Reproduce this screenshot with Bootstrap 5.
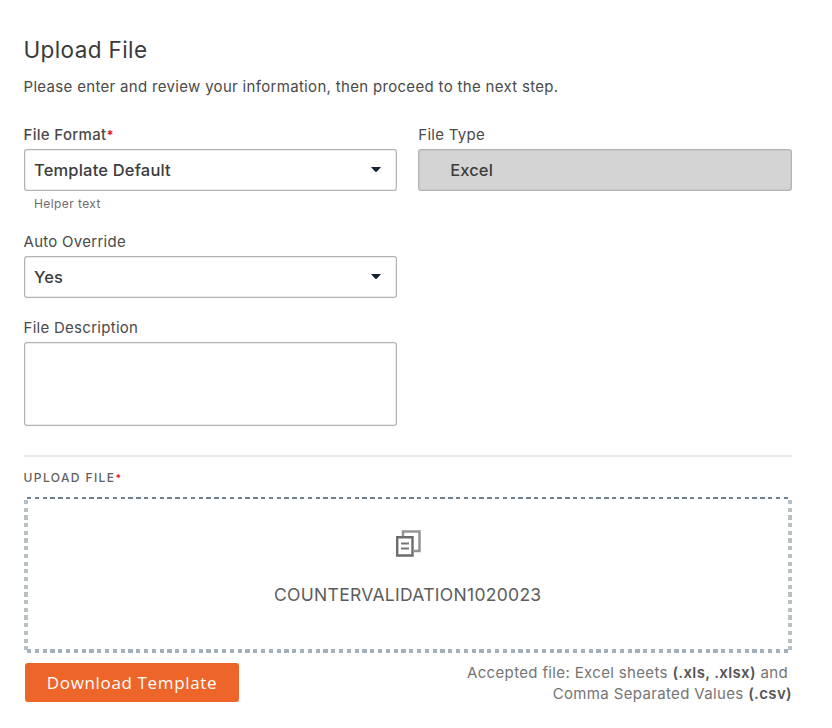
<!DOCTYPE html>
<html lang="en">
<head>
<meta charset="utf-8">
<meta name="viewport" content="width=device-width, initial-scale=1">
<title>Upload File</title>
<link href="https://cdn.jsdelivr.net/npm/bootstrap@5.3.0/dist/css/bootstrap.min.css" rel="stylesheet">
<style>
body{font-family:Inter,"Liberation Sans",sans-serif;color:#4a4a4a;background:#fff}
.upload-page{width:832px;height:728px;padding:35px 40px 0 23.5px}
.page-title{font-size:22.5px;line-height:30px;letter-spacing:.38px;color:#3a3a3a;font-weight:400}
.intro{font-size:15px;line-height:20px;letter-spacing:.32px;margin-top:12px}
.fields{--bs-gutter-x:21px;margin-top:28px}
.fields-next{margin-top:20px}
.form-label{display:block;font-size:15px;line-height:20px;letter-spacing:.28px;margin-bottom:4px}
.form-label.strong-label{font-weight:500;letter-spacing:.32px}
.description-label{margin-top:20px}
.req{color:#e02020;font-weight:700;font-size:.85em;line-height:0;letter-spacing:0}
.field-box{height:42px;border:1.5px solid #b3b3b3;border-width:2px 1px;outline:1px solid #ececec;outline-offset:-2px;border-radius:3px;font-size:16.5px;font-weight:500;line-height:24px;letter-spacing:.18px;color:#3c3c3c;padding:0 15px 0 9.5px;background:#fff}
.field-locked{background:#d4d4d4;padding-left:31px;border-color:#b3b3b3;outline-color:#c9c9c9;letter-spacing:.1px}
.helper{font-size:12px;line-height:16px;letter-spacing:.42px;padding-left:10.5px;margin-top:5px;color:#6c6c6c}
textarea.field-box{height:84px;resize:none}
.rule{height:2px;background:#e9e9e9;margin-top:29px}
.section-label{font-size:12px;line-height:16px;letter-spacing:1.4px;margin-top:13px;font-weight:500;color:#606060}
.drop-area{height:156px;margin-top:11px;
background:
repeating-linear-gradient(90deg,#6f8090 0 4.4px,transparent 4.4px 7.8px) 3px 0/calc(100% - 6px) 2px no-repeat,
repeating-linear-gradient(90deg,#a5b0b9 0 4.2px,transparent 4.2px 7.8px) 3px 100%/calc(100% - 6px) 4px no-repeat,
repeating-linear-gradient(180deg,#b7c0c7 0 4.2px,transparent 4.2px 7.7px) 0 3px/4px calc(100% - 6px) no-repeat,
repeating-linear-gradient(180deg,#b7c0c7 0 4.2px,transparent 4.2px 7.7px) 100% 3px/4px calc(100% - 6px) no-repeat}
.drop-area svg{margin-top:32px}
.file-name{font-size:17.5px;line-height:24px;letter-spacing:.3px;margin-top:26px;color:#5c5c5c}
.btn-template{--bs-btn-color:#fff;--bs-btn-bg:#ee6529;--bs-btn-hover-bg:#d9581f;--bs-btn-hover-color:#fff;width:214px;height:39px;margin:10px 0 0 1.5px;padding:0;border:0;border-radius:3px;font-family:"Open Sans",sans-serif;font-size:17px;letter-spacing:.65px}
.accepted{font-size:15px;line-height:21px;letter-spacing:.35px;margin-top:9px;color:#747474}
.accepted b{font-weight:600;color:#555}
</style>
<script src="https://cdn.jsdelivr.net/npm/bootstrap@5.3.0/dist/js/bootstrap.bundle.min.js"></script>
</head>
<body>
<main class="upload-page overflow-hidden">
<h1 class="page-title mb-0">Upload File</h1>
<p class="intro mb-0">Please enter and review your information, then proceed to the next step.</p>
<div class="row fields">
  <div class="col-6">
    <span class="form-label strong-label">File Format<span class="req">*</span></span>
    <div class="field-box d-flex align-items-center justify-content-between" role="combobox" tabindex="0"><span>Template Default</span><svg width="10" height="6" viewBox="0 0 10 6"><path d="M0 0h10L6 4.6q-1 .9-2 0z" fill="#172033"/></svg></div>
    <div class="helper">Helper text</div>
  </div>
  <div class="col-6">
    <span class="form-label">File Type</span>
    <div class="field-box field-locked d-flex align-items-center"><span>Excel</span></div>
  </div>
</div>
<div class="row fields fields-next">
  <div class="col-6">
    <span class="form-label">Auto Override</span>
    <div class="field-box d-flex align-items-center justify-content-between" role="combobox" tabindex="0"><span>Yes</span><svg width="10" height="6" viewBox="0 0 10 6"><path d="M0 0h10L6 4.6q-1 .9-2 0z" fill="#172033"/></svg></div>
    <label class="form-label description-label" for="description">File Description</label>
    <textarea id="description" class="field-box d-block w-100"></textarea>
  </div>
</div>
<div class="rule"></div>
<div class="section-label">UPLOAD FILE<span class="req">*</span></div>
<div class="drop-area d-flex flex-column align-items-center">
  <svg width="26" height="28" viewBox="0 0 26 28" fill="none"><path d="M8 7V2.5H24.5V22H19" stroke="#949494" stroke-width="2.5"/><path d="M2.2 8.2H17.5V26.5H2.2z" fill="#fff" stroke="#6c6c6c" stroke-width="2.4"/><path d="M6 14.5h8M6 19.5h8" stroke="#777" stroke-width="2"/></svg>
  <div class="file-name">COUNTERVALIDATION1020023</div>
</div>
<div class="d-flex justify-content-between align-items-start">
  <button type="button" class="btn btn-template">Download Template</button>
  <div class="accepted text-end"><span class="pe-1">Accepted file: Excel sheets <b>(.xls, .xlsx)</b> and</span><br>Comma Separated Values <b>(.csv)</b></div>
</div>
</main>
</body>
</html>
